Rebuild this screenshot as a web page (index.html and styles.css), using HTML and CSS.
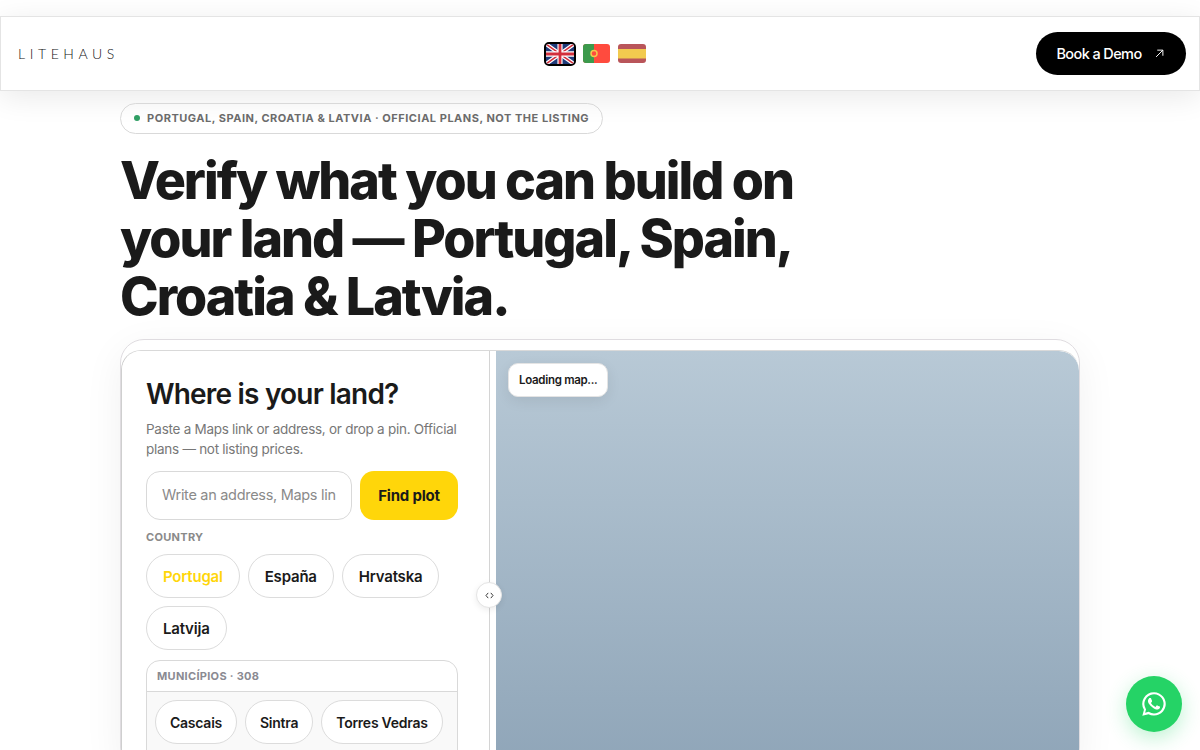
FILE: index.html
```html
<!DOCTYPE html>
<html lang="en">
<head>
    <meta charset="UTF-8">
    <meta name="viewport" content="width=device-width, initial-scale=1.0">
    <title>Litehaus</title>
    <link rel="stylesheet" href="styles.css">
</head>
<body>
    <header class="topbar">
        <a class="logo" href="#">LITEHAUS</a>
        <div class="flags">
            <a class="flag flag-active" href="#">
                <svg viewBox="0 0 60 40" width="28" height="20" preserveAspectRatio="none">
                    <rect width="60" height="40" fill="#1f3a7a"/>
                    <path d="M0 0L60 40M60 0L0 40" stroke="#fff" stroke-width="8"/>
                    <path d="M0 0L60 40M60 0L0 40" stroke="#d22f3c" stroke-width="3"/>
                    <path d="M30 0V40M0 20H60" stroke="#fff" stroke-width="11"/>
                    <path d="M30 0V40M0 20H60" stroke="#d22f3c" stroke-width="6"/>
                </svg>
            </a>
            <a class="flag" href="#">
                <svg viewBox="0 0 27 19" width="27" height="19">
                    <rect width="27" height="19" fill="#ff4b3e"/>
                    <rect width="11" height="19" fill="#3c9a4c"/>
                    <circle cx="11" cy="9.500" r="3" fill="#ff4b3e" stroke="#f2c94c" stroke-width="1.500"/>
                </svg>
            </a>
            <a class="flag" href="#">
                <svg viewBox="0 0 28 19" width="28" height="19">
                    <rect width="28" height="19" fill="#b9555a"/>
                    <rect y="5" width="28" height="9.500" fill="#f2ca4f"/>
                </svg>
            </a>
        </div>
        <a class="demo-btn" href="#">
            Book a Demo
            <svg viewBox="0 0 12 12" width="9" height="9" fill="none" stroke="#fff" stroke-width="1.300">
                <path d="M1.500 10.500L10.500 1.500M3 1.500H10.500V9"/>
            </svg>
        </a>
    </header>

    <main class="page">
        <p class="eyebrow"><span class="dot"></span>PORTUGAL, SPAIN, CROATIA &amp; LATVIA · OFFICIAL PLANS, NOT THE LISTING</p>
        <h1>Verify what you can build on your land — Portugal, Spain, Croatia &amp; Latvia.</h1>

        <section class="shell">
            <div class="tool">
                <div class="side">
                    <h2>Where is your land?</h2>
                    <p class="lead">Paste a Maps link or address, or drop a pin. Official plans — not listing prices.</p>
                    <form class="search">
                        <input type="text" placeholder="Write an address, Maps link or coordinates">
                        <button type="button">Find plot</button>
                    </form>
                    <div class="label">COUNTRY</div>
                    <div class="chips">
                        <button class="chip chip-active" type="button">Portugal</button>
                        <button class="chip" type="button">España</button>
                        <button class="chip" type="button">Hrvatska</button>
                        <button class="chip" type="button">Latvija</button>
                    </div>
                    <div class="towns">
                        <div class="towns-head">MUNICÍPIOS · 308</div>
                        <div class="towns-list">
                            <button class="chip" type="button">Cascais</button>
                            <button class="chip" type="button">Sintra</button>
                            <button class="chip" type="button">Torres Vedras</button>
                        </div>
                    </div>
                </div>
                <div class="map">
                    <span class="map-status">Loading map...</span>
                </div>
                <span class="handle">
                    <svg viewBox="0 0 10 8" width="9" height="7" fill="none" stroke="#333" stroke-width="1.100">
                        <path d="M3.500 1L1 4L3.500 7M6.500 1L9 4L6.500 7"/>
                    </svg>
                </span>
            </div>
        </section>
    </main>

    <a class="whatsapp" href="#">
        <svg viewBox="0 0 24 24" width="28" height="28" fill="#fff">
            <path d="M12 1.900A10 10 0 0 0 3.400 17L2 22.100l5.300-1.400A10 10 0 1 0 12 1.900zm0 18.200a8.200 8.200 0 0 1-4.200-1.200l-.3-.2-3.100.8.8-3-.2-.3A8.200 8.200 0 1 1 12 20.100z"/>
            <path d="M16.600 14c-.3-.1-1.500-.7-1.700-.8s-.4-.1-.6.1-.7.8-.8 1-.3.2-.6.1a6.800 6.800 0 0 1-3.400-3c-.3-.4 0-.5.2-.7l.4-.5.2-.4v-.5L9.500 7.300c-.2-.5-.4-.4-.6-.4h-.5c-.2 0-.5.1-.7.3a2.900 2.900 0 0 0-.9 2.200c0 1.300.9 2.500 1.100 2.700s1.800 2.800 4.400 3.900c2.100.9 2.600.7 3 .7s1.500-.6 1.700-1.200.2-1.100.1-1.200-.2-.2-.5-.3z"/>
        </svg>
    </a>
</body>
</html>
```

FILE: styles.css
```css
* {
    box-sizing: border-box;
}
html, body {
    height: 100%;
}
body {
    margin: 0;
    padding-top: 16px;
    overflow: hidden;
    font-family: 'Inter', sans-serif;
    background: #fff;
    color: #1a1a1a;
}
button, input {
    font-family: inherit;
}
a {
    text-decoration: none;
}

/* top bar */
.topbar {
    height: 75px;
    padding: 0 13px 0 17px;
    display: grid;
    grid-template-columns: 1fr auto 1fr;
    align-items: center;
    background: #fff;
    border: 1px solid #e4e4e4;
    box-shadow: 0 6px 30px rgba(0, 0, 0, 0.09);
}
.logo {
    font-family: 'Lato', sans-serif;
    font-weight: 300;
    font-size: 14px;
    letter-spacing: 4.6px;
    color: #111;
}
.flags {
    display: flex;
    align-items: center;
    gap: 7px;
    margin-right: 15px;
}
.flag {
    display: flex;
    border-radius: 3px;
    overflow: hidden;
}
.flag:last-child {
    margin-left: 1px;
}
.flag-active {
    border: 2px solid #000;
    border-radius: 5px;
}
.demo-btn {
    justify-self: end;
    width: 150px;
    height: 43px;
    padding-right: 2px;
    display: flex;
    align-items: center;
    justify-content: center;
    gap: 13px;
    border-radius: 22px;
    background: #000;
    color: #fff;
    font-size: 14.5px;
    font-weight: 500;
    letter-spacing: -0.6px;
}

/* hero */
.page {
    width: 960px;
    margin: 12px auto 0;
}
.eyebrow {
    display: inline-flex;
    align-items: center;
    gap: 7px;
    height: 31px;
    margin: 0;
    padding: 0 13px 1px;
    border: 1px solid #d9d9d9;
    border-radius: 16px;
    font-size: 11px;
    font-weight: 700;
    letter-spacing: 0.52px;
    color: #6b6b6b;
}
.dot {
    width: 6px;
    height: 6px;
    border-radius: 50%;
    background: #2f9e63;
}
h1 {
    width: 700px;
    margin: 18px 0 13px;
    font-size: 52px;
    line-height: 58px;
    font-weight: 800;
    letter-spacing: -2px;
    color: #1a1a1a;
}

/* land tool */
.shell {
    padding: 10px 0 0 0;
    border: 1px solid #dfdce0;
    border-radius: 24px;
    box-shadow: 0 10px 40px rgba(0, 0, 0, 0.06);
}
.tool {
    position: relative;
    display: flex;
    height: 420px;
    border-radius: 20px 20px 0 0;
    border-top: 1px solid #d9d9d9;
    border-left: 1px solid #cfcfcf;
    overflow: hidden;
}
.side {
    width: 368px;
    padding: 25px 31px 0 24px;
    border-right: 1px solid #d4d4d4;
    background: #fff;
}
h2 {
    margin: 0 0 7px;
    font-size: 28px;
    line-height: 36px;
    font-weight: 600;
    letter-spacing: -0.8px;
    color: #1a1a1a;
}
.lead {
    margin: 0 0 12px;
    font-size: 13.5px;
    line-height: 20px;
    letter-spacing: -0.27px;
    color: #777;
}
.search {
    display: flex;
    gap: 8px;
}
.search input {
    width: 206px;
    height: 49px;
    padding: 0 15px 2px;
    border: 1px solid #d9d9d9;
    border-radius: 14px;
    font-size: 14.5px;
    letter-spacing: -0.3px;
    outline: none;
}
.search input::placeholder {
    color: #8a8a8a;
}
.search button {
    width: 98px;
    height: 49px;
    border: none;
    border-radius: 14px;
    background: #ffd60a;
    color: #1a1a1a;
    font-size: 15px;
    font-weight: 700;
    letter-spacing: -0.2px;
}
.label {
    margin: 10px 0 10px;
    font-size: 11px;
    font-weight: 700;
    letter-spacing: 0.3px;
    color: #8a8a8a;
}
.chips {
    display: flex;
    flex-wrap: wrap;
    gap: 8px;
}
.chip {
    height: 44px;
    padding: 0 16px;
    border: 1px solid #dcdcdc;
    border-radius: 22px;
    background: #fff;
    color: #1a1a1a;
    font-size: 15px;
    font-weight: 600;
    letter-spacing: -0.2px;
    white-space: nowrap;
}
.chip-active {
    color: #ffd60a;
}
.towns {
    margin-top: 10px;
    border: 1px solid #d9d9d9;
    border-radius: 14px 14px 0 0;
    height: 200px;
    overflow: hidden;
}
.towns-head {
    height: 31px;
    padding: 0 10px;
    display: flex;
    align-items: center;
    border-bottom: 1px solid #d9d9d9;
    font-size: 11px;
    font-weight: 700;
    letter-spacing: 0.3px;
    color: #8a8a92;
}
.towns-list {
    display: flex;
    gap: 8px;
    padding: 8px;
    height: 168px;
    background: #f9f9f9;
}
.towns-list .chip {
    padding: 0 14px;
    font-size: 14px;
    letter-spacing: -0.25px;
}
.map {
    position: relative;
    flex: 1;
    margin: 0 0 0 6px;
    background: linear-gradient(to bottom, #b8c9d6, #8fa5b8);
    border-radius: 0 20px 0 0;
}
.map-status {
    position: absolute;
    top: 12px;
    left: 12px;
    padding: 10px 10px;
    border: 1px solid #e4e4e4;
    border-radius: 10px;
    background: #fff;
    box-shadow: 0 4px 14px rgba(0, 0, 0, 0.08);
    font-size: 11.5px;
    line-height: 12px;
    font-weight: 600;
    letter-spacing: -0.3px;
    color: #1a1a1a;
}
.handle {
    position: absolute;
    top: 231px;
    left: 354px;
    width: 26px;
    height: 26px;
    display: flex;
    align-items: center;
    justify-content: center;
    border: 1px solid #e4e4e4;
    border-radius: 50%;
    background: #fff;
    box-shadow: 0 2px 6px rgba(0, 0, 0, 0.08);
}
.whatsapp {
    position: fixed;
    right: 18px;
    bottom: 18px;
    width: 56px;
    height: 56px;
    display: flex;
    align-items: center;
    justify-content: center;
    border-radius: 50%;
    background: #25d366;
    box-shadow: 0 6px 20px rgba(37, 211, 102, 0.3);
}
```
